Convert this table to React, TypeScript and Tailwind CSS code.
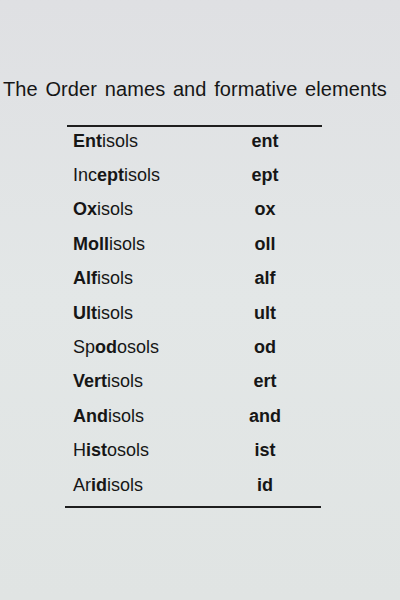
import React from "react";

const rows: { parts: [string, boolean][]; el: string }[] = [
  { parts: [["Ent", true], ["isols", false]], el: "ent" },
  { parts: [["Inc", false], ["ept", true], ["isols", false]], el: "ept" },
  { parts: [["Ox", true], ["isols", false]], el: "ox" },
  { parts: [["Moll", true], ["isols", false]], el: "oll" },
  { parts: [["Alf", true], ["isols", false]], el: "alf" },
  { parts: [["Ult", true], ["isols", false]], el: "ult" },
  { parts: [["Sp", false], ["od", true], ["osols", false]], el: "od" },
  { parts: [["Vert", true], ["isols", false]], el: "ert" },
  { parts: [["And", true], ["isols", false]], el: "and" },
  { parts: [["H", false], ["ist", true], ["osols", false]], el: "ist" },
  { parts: [["Ar", false], ["id", true], ["isols", false]], el: "id" },
];

export default function App() {
  return (
    <div
      className="w-[400px] h-[600px] overflow-hidden bg-gradient-to-b from-[#dfe0e3] via-[#e3e7e7] to-[#e0e4e3] text-[#161616] flex flex-col"
      style={{ fontFamily: '"Liberation Sans", Arial, sans-serif' }}
    >
      <div className="pt-[75px] pl-[3px] text-[20px] leading-[28px] tracking-[0.1px] [word-spacing:2px] whitespace-nowrap">
        The Order names and formative elements
      </div>
      <div className="mt-[22px] ml-[67px] w-[255px] h-[2px] bg-[#1e1e1e]" />
      <div className="ml-[68px] -mt-[3px] flex flex-col">
        {rows.map((r, i) => (
          <div key={i} className="h-[34.4px] flex items-center text-[18px]">
            <div className="w-[142px] pl-[5px] whitespace-nowrap">
              {r.parts.map(([t, b], j) => (
                <span key={j} className={b ? "font-bold" : ""}>
                  {t}
                </span>
              ))}
            </div>
            <div className="w-[110px] text-center font-bold">{r.el}</div>
          </div>
        ))}
      </div>
      <div className="mt-[4px] ml-[65px] w-[256px] h-[2px] bg-[#1e1e1e]" />
    </div>
  );
}
